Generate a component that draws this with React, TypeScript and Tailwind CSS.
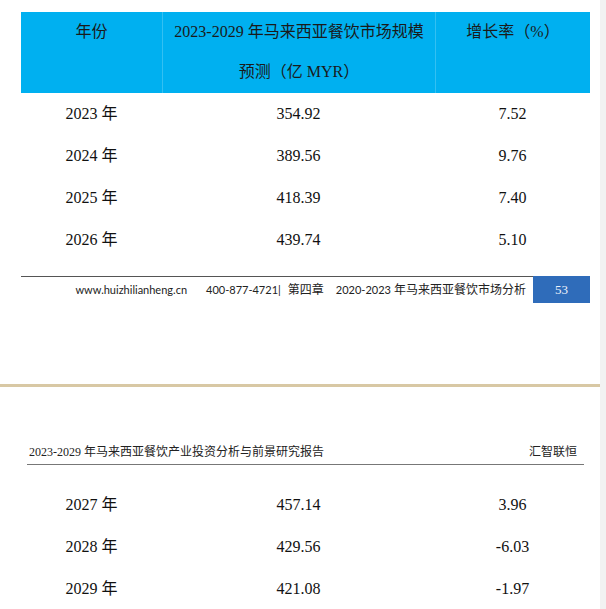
const firstRows = [
  { year: "2023 年", value: "354.92", rate: "7.52" },
  { year: "2024 年", value: "389.56", rate: "9.76" },
  { year: "2025 年", value: "418.39", rate: "7.40" },
  { year: "2026 年", value: "439.74", rate: "5.10" },
];

const secondRows = [
  { year: "2027 年", value: "457.14", rate: "3.96" },
  { year: "2028 年", value: "429.56", rate: "-6.03" },
  { year: "2029 年", value: "421.08", rate: "-1.97" },
];

function DataRows({ rows }: { rows: typeof firstRows }) {
  return (
    <div className="ml-[21px] w-[569px] text-[16px] text-[#111] [font-family:'Liberation_Serif','Noto_Sans_CJK_SC',serif]">
      {rows.map((row) => (
        <div
          key={row.year}
          className="grid h-[42px] grid-cols-[141px_273px_155px] items-center text-center"
        >
          <div>{row.year}</div>
          <div>{row.value}</div>
          <div>{row.rate}</div>
        </div>
      ))}
    </div>
  );
}

export default function App() {
  return (
    <div className="flex h-[609px] w-[606px] overflow-hidden bg-white">
      <div className="w-[600px]">
        {/* page 53 */}
        <div className="pt-[12px]">
          <div className="ml-[21px] grid h-[81px] w-[569px] grid-cols-[141px_273px_155px] bg-[#00b0f0] text-center text-[16px] leading-[40px] text-[#1a1a1a] [font-family:'Liberation_Serif','Noto_Sans_CJK_SC',serif]">
            <div>年份</div>
            <div className="border-l border-[#33c0f2]">
              <div>2023-2029 年马来西亚餐饮市场规模</div>
              <div>预测（亿 MYR）</div>
            </div>
            <div className="border-l border-[#33c0f2]">增长率（%）</div>
          </div>
          <DataRows rows={firstRows} />
        </div>

        <div className="ml-[21px] mt-[15px] flex w-[569px]">
          <div className="flex h-[27px] flex-1 items-center justify-end border-t border-[#555] pr-[7px] text-[12px] text-[#222] [font-family:'Lato','Noto_Sans_CJK_SC',sans-serif]">
            <span className="text-[11px]">www.huizhilianheng.cn</span>
            <span className="ml-[19px] text-[11px]">400-877-4721|</span>
            <span className="ml-[7px]">第四章</span>
            <span className="ml-[12px]">
              <span className="text-[11px]">2020-2023</span> 年马来西亚餐饮市场分析
            </span>
          </div>
          <div className="flex h-[27px] w-[57px] items-center justify-center bg-[#2f6cba] text-[13px] text-[#eef2fa] [font-family:'Liberation_Serif',serif]">
            53
          </div>
        </div>

        <div className="mt-[81px] h-[3px] bg-[#d8c8a4]" />

        {/* next page */}
        <div className="ml-[27px] mt-[57px] flex w-[557px] items-end justify-between border-b border-[#777] pb-[4px] pl-[2px] pr-[7px] text-[12px] leading-[16px] text-[#222] [font-family:'Liberation_Serif','Noto_Sans_CJK_SC',serif]">
          <span>2023-2029 年马来西亚餐饮产业投资分析与前景研究报告</span>
          <span>汇智联恒</span>
        </div>
        <div className="mt-[19px]">
          <DataRows rows={secondRows} />
        </div>
      </div>
      <div className="w-[6px] bg-[#f2f2f2]" />
    </div>
  );
}
